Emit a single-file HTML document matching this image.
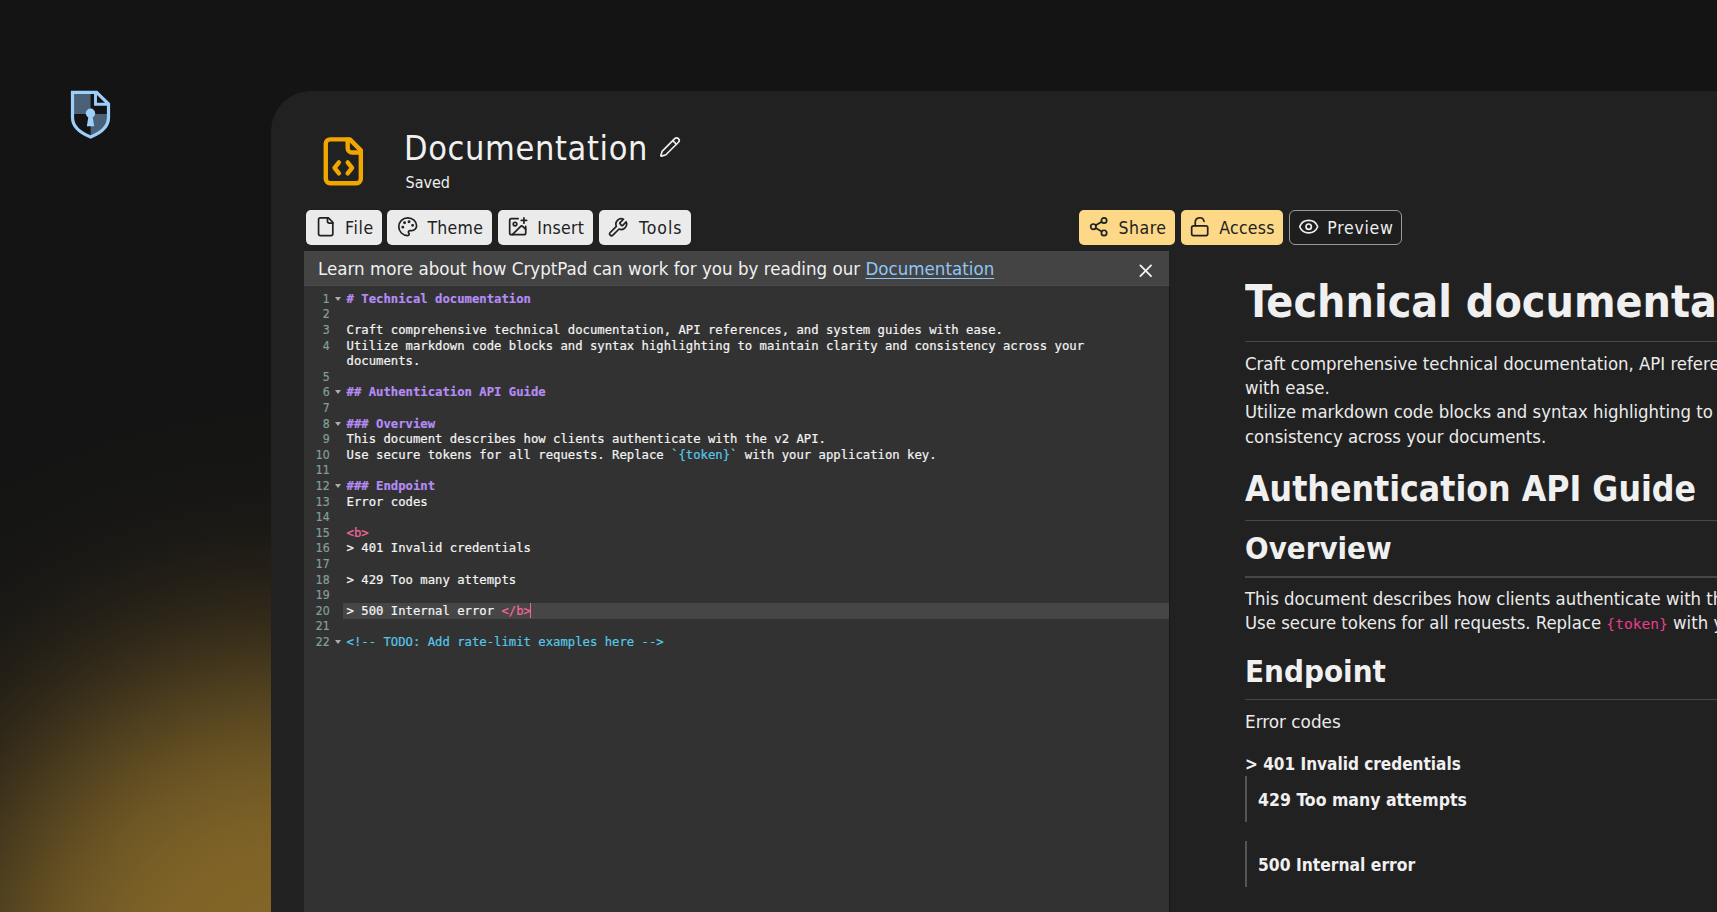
<!DOCTYPE html>
<html lang="en">
<head>
<meta charset="utf-8">
<title>Documentation - CryptPad</title>
<style>
*{box-sizing:border-box;margin:0;padding:0}
html,body{width:1717px;height:912px;overflow:hidden;background:#141414}
body{position:relative;font-family:"DejaVu Sans Condensed","Liberation Sans",sans-serif;color:#eee;-webkit-font-smoothing:antialiased}
.abs{position:absolute}
.nw{white-space:nowrap}
#glow{left:0;top:0;width:1717px;height:912px;
 background:radial-gradient(circle at 282.7px 985.6px,rgb(132,103,40) 0px,rgb(132,102,40) 20px,rgb(131,102,40) 40px,rgb(131,102,40) 60px,rgb(130,101,40) 80px,rgb(129,101,39) 100px,rgb(128,100,39) 120px,rgb(126,98,39) 140px,rgb(123,96,38) 160px,rgb(119,93,38) 180px,rgb(114,90,37) 200px,rgb(109,86,36) 220px,rgb(102,81,35) 240px,rgb(95,75,33) 260px,rgb(86,69,32) 280px,rgb(78,63,30) 300px,rgb(69,56,29) 320px,rgb(61,50,27) 340px,rgb(53,44,26) 360px,rgb(46,39,25) 380px,rgb(40,35,24) 400px,rgb(35,31,23) 420px,rgb(31,28,22) 440px,rgb(27,25,21) 460px,rgb(25,24,21) 480px,rgb(23,22,21) 500px,rgb(22,22,20) 520px,rgb(21,21,20) 540px,rgb(21,21,20) 560px,rgb(20,20,20) 580px,rgb(20,20,20) 600px,rgb(20,20,20) 620px,rgb(20,20,20) 640px,rgb(20,20,20) 680px)}
#logo{left:70px;top:90px;width:42px;height:50px}
#panel{left:271px;top:91px;width:1500px;height:900px;background:#212121;border-top-left-radius:40px}
svg.ic{position:absolute;fill:none;stroke:currentColor;stroke-width:2;stroke-linecap:round;stroke-linejoin:round}
#appicon{left:316.8px;top:134.8px;width:52.6px;height:52.6px;color:#f2a600}
#title{left:404px;top:124px;font-size:34px;line-height:48px;color:#f0f0f0;letter-spacing:.63px}
#pencil{left:658.6px;top:136.2px;width:22px;height:22px;color:#eee;stroke-width:1.8}
#saved{left:405.5px;top:171.6px;font-size:16px;line-height:22px;color:#eee}
.btn{position:absolute;top:209.5px;height:35.2px;border-radius:5px;background:#ebebeb;color:#212121;font-size:17.5px;line-height:35.2px}
.btn svg.ic{left:9.3px;top:6.9px;width:21.4px;height:21.4px;stroke-width:1.9}
.btn span{position:absolute;left:39.4px;top:1.2px;white-space:nowrap}
.btn.y{background:#fdd886}
.btn.o{background:#1e1e1e;border:1.2px solid #9a9a9a;color:#eee;border-radius:6px}
.btn.o svg.ic{left:8.3px;top:5.9px}
.btn.o span{left:38.4px;top:0px}
#banner{left:304px;top:251px;width:864.5px;height:34.7px;background:#444;border-bottom:1px solid #4a4a4a;font-size:17.5px;line-height:34px;color:#f0f0f0}
#banner .t{position:absolute;left:14px;top:1px;white-space:nowrap;transform:scaleX(1.061);transform-origin:0 0}
#banner a{color:#8ec6f6;text-decoration:underline;text-underline-offset:2.6px;text-decoration-thickness:1.1px}
#banner svg.ic{left:831.1px;top:8.9px;width:21.4px;height:21.4px;color:#f5f5f5;stroke-width:2}
#editor{left:304px;top:285.7px;width:866px;height:640px;background:#323232;border-right:1.5px solid #181818;font-family:"DejaVu Sans Mono","Liberation Mono",monospace;font-size:12.25px;line-height:15.59px;color:#f4f4f4;-webkit-text-stroke:.2px}
#editor .ln{position:absolute;left:0;width:25.8px;text-align:right;font-family:"DejaVu Sans Condensed","Liberation Sans",sans-serif;font-size:12.2px;color:#82a096;height:15.59px;line-height:15.59px}
#editor .fd{position:absolute;left:30.5px;width:0;height:0;border-left:3.1px solid transparent;border-right:3.1px solid transparent;border-top:4.5px solid #adadad}
#editor .l{position:absolute;left:42.5px;white-space:pre;height:15.59px;line-height:15.59px}
#editor .act{position:absolute;left:38.8px;width:826px;height:16.2px;background:#464646}
.h{color:#b58cf2;font-weight:bold}
.tg{color:#f2679f}
.cm{color:#56c8e8}
.q{color:#9ad0c0}
#cursor{position:absolute;width:1.2px;background:#f5609f;height:15.4px}
#preview{left:1244.8px;top:260px;width:600px;color:#ebebeb;font-size:17.5px;line-height:24.4px}
#preview .t{position:absolute;left:0;white-space:nowrap;transform-origin:0 0}
#preview .hr{position:absolute;left:0;width:600px;height:1.3px;background:#474747}
#preview .b{font-weight:bold;color:#f0f0f0}
#preview code{font-family:"DejaVu Sans Mono","Liberation Mono",monospace;font-size:13.9px;color:#e83e8c}
#preview .bar{position:absolute;left:0;width:2.2px;background:#555}
</style>
</head>
<body>
<div id="glow" class="abs"></div>
<svg id="logo" class="abs" viewBox="70 90 42 50">
 <path d="M72.5 92.3H96.6L108.5 104V117.5C108.5 127 101.5 132.6 90.6 137C79.6 132.6 72.5 127 72.5 117.5Z" fill="#141414"/>
 <path d="M73 93H90.6V114H73Z" fill="#4a6178"/>
 <path d="M90.6 114H108V118C108 127 101 132.4 90.6 136.6Z" fill="#4a6178"/>
 <path d="M72.5 92.3H96.6L108.5 104V117.5C108.5 127 101.5 132.6 90.6 137C79.6 132.6 72.5 127 72.5 117.5Z" fill="none" stroke="#9ccffa" stroke-width="3.2" stroke-linejoin="miter"/>
 <path d="M95.5 92.5V104.3H108.3" fill="none" stroke="#9ccffa" stroke-width="2.9"/>
 <circle cx="90.5" cy="113.3" r="4.7" fill="#9ccffa"/>
 <path d="M88.7 115L86.8 126.3H94.2L92.3 115Z" fill="#9ccffa"/>
</svg>
<div id="panel" class="abs"></div>

<svg id="appicon" class="ic" viewBox="0 0 24 24"><path d="M10 12.5 8 15l2 2.5"/><path d="m14 12.5 2 2.5-2 2.5"/><path d="M14 2v4a2 2 0 0 0 2 2h4"/><path d="M15 2H6a2 2 0 0 0-2 2v16a2 2 0 0 0 2 2h12a2 2 0 0 0 2-2V7z"/></svg>
<div id="title" class="abs nw">Documentation</div>
<svg id="pencil" class="ic" viewBox="0 0 24 24"><path d="M21.174 6.812a1 1 0 0 0-3.986-3.987L3.842 16.174a2 2 0 0 0-.5.83l-1.321 4.352a.5.5 0 0 0 .623.622l4.353-1.32a2 2 0 0 0 .83-.497z"/><path d="m15 5 4 4"/></svg>
<div id="saved" class="abs nw">Saved</div>

<div class="btn" style="left:306.1px;width:76px"><svg class="ic" viewBox="0 0 24 24"><path d="M15 2H6a2 2 0 0 0-2 2v16a2 2 0 0 0 2 2h12a2 2 0 0 0 2-2V7Z"/><path d="M14 2v4a2 2 0 0 0 2 2h4"/></svg><span style="letter-spacing:0.65px;margin-left:-0.4px">File</span></div>
<div class="btn" style="left:387.4px;width:105px"><svg class="ic" viewBox="0 0 24 24"><circle cx="13.5" cy="6.5" r=".7" fill="currentColor"/><circle cx="17.5" cy="10.5" r=".7" fill="currentColor"/><circle cx="8.5" cy="7.5" r=".7" fill="currentColor"/><circle cx="6.5" cy="12.5" r=".7" fill="currentColor"/><path d="M12 2C6.5 2 2 6.5 2 12s4.5 10 10 10c.926 0 1.648-.746 1.648-1.688 0-.437-.18-.835-.437-1.125-.29-.289-.438-.652-.438-1.125a1.64 1.64 0 0 1 1.668-1.668h1.996c3.051 0 5.555-2.503 5.555-5.554C21.965 6.012 17.461 2 12 2z"/></svg><span style="letter-spacing:0.3px;margin-left:0.6px">Theme</span></div>
<div class="btn" style="left:497.8px;width:95.5px"><svg class="ic" style="margin-left:-0.6px;margin-top:-0.3px" viewBox="0 0 24 24"><path d="M16 5h6"/><path d="M19 2v6"/><path d="M21 11.5V19a2 2 0 0 1-2 2H5a2 2 0 0 1-2-2V5a2 2 0 0 1 2-2h7.5"/><path d="m21 15-3.086-3.086a2 2 0 0 0-2.828 0L6 21"/><circle cx="9" cy="9" r="2"/></svg><span style="letter-spacing:0.3px;margin-left:0px">Insert</span></div>
<div class="btn" style="left:599.4px;width:91.6px"><svg class="ic" style="margin-left:-1.6px;margin-top:0.4px" viewBox="0 0 24 24"><path d="M14.7 6.3a1 1 0 0 0 0 1.4l1.6 1.6a1 1 0 0 0 1.4 0l3.77-3.77a6 6 0 0 1-7.94 7.94l-6.91 6.91a2.12 2.12 0 0 1-3-3l6.91-6.91a6 6 0 0 1 7.94-7.94l-3.76 3.76z"/></svg><span style="letter-spacing:1.0px;margin-left:0.3px">Tools</span></div>

<div class="btn y" style="left:1079px;width:96.1px"><svg class="ic" viewBox="0 0 24 24"><circle cx="18" cy="5" r="3"/><circle cx="6" cy="12" r="3"/><circle cx="18" cy="19" r="3"/><line x1="8.59" x2="15.42" y1="13.51" y2="17.49"/><line x1="15.41" x2="8.59" y1="6.51" y2="10.49"/></svg><span style="letter-spacing:0.5px;margin-left:0.2px">Share</span></div>
<div class="btn y" style="left:1181px;width:102px"><svg class="ic" style="margin-left:-1.3px;margin-top:0px" viewBox="0 0 24 24"><rect width="18" height="11" x="3" y="11" rx="2" ry="2"/><path d="M7 11V7a5 5 0 0 1 9.9-1"/></svg><span style="letter-spacing:0.3px;margin-left:-1.2px">Access</span></div>
<div class="btn o" style="left:1289px;width:112.8px"><svg class="ic" style="margin-left:-0.8px;margin-top:0px" viewBox="0 0 24 24"><path d="M2.062 12.348a1 1 0 0 1 0-.696 10.75 10.75 0 0 1 19.876 0 1 1 0 0 1 0 .696 10.75 10.75 0 0 1-19.876 0"/><circle cx="12" cy="12" r="3"/></svg><span style="letter-spacing:0.75px;margin-left:-1.2px">Preview</span></div>

<div id="banner" class="abs"><div class="t">Learn more about how CryptPad can work for you by reading our <a>Documentation</a></div><svg class="ic" viewBox="0 0 24 24"><path d="M18 6 6 18"/><path d="m6 6 12 12"/></svg></div>

<div id="editor" class="abs">
<div class="ln" style="top:6.20px">1</div>
<div class="fd" style="top:11.10px"></div>
<div class="l" style="top:6.20px"><span class="h"># Technical documentation</span></div>
<div class="ln" style="top:21.79px">2</div>
<div class="ln" style="top:37.38px">3</div>
<div class="l" style="top:37.38px">Craft comprehensive technical documentation, API references, and system guides with ease.</div>
<div class="ln" style="top:52.97px">4</div>
<div class="l" style="top:52.97px">Utilize markdown code blocks and syntax highlighting to maintain clarity and consistency across your</div>
<div class="l" style="top:68.56px">documents.</div>
<div class="ln" style="top:84.15px">5</div>
<div class="ln" style="top:99.74px">6</div>
<div class="fd" style="top:104.64px"></div>
<div class="l" style="top:99.74px"><span class="h">## Authentication API Guide</span></div>
<div class="ln" style="top:115.33px">7</div>
<div class="ln" style="top:130.92px">8</div>
<div class="fd" style="top:135.82px"></div>
<div class="l" style="top:130.92px"><span class="h">### Overview</span></div>
<div class="ln" style="top:146.51px">9</div>
<div class="l" style="top:146.51px">This document describes how clients authenticate with the v2 API.</div>
<div class="ln" style="top:162.10px">10</div>
<div class="l" style="top:162.10px">Use secure tokens for all requests. Replace <span class="q">`</span><span class="cm">{token}</span><span class="q">`</span> with your application key.</div>
<div class="ln" style="top:177.69px">11</div>
<div class="ln" style="top:193.28px">12</div>
<div class="fd" style="top:198.18px"></div>
<div class="l" style="top:193.28px"><span class="h">### Endpoint</span></div>
<div class="ln" style="top:208.87px">13</div>
<div class="l" style="top:208.87px">Error codes</div>
<div class="ln" style="top:224.46px">14</div>
<div class="ln" style="top:240.05px">15</div>
<div class="l" style="top:240.05px"><span class="tg">&lt;b&gt;</span></div>
<div class="ln" style="top:255.64px">16</div>
<div class="l" style="top:255.64px">&gt; 401 Invalid credentials</div>
<div class="ln" style="top:271.23px">17</div>
<div class="ln" style="top:286.82px">18</div>
<div class="l" style="top:286.82px">&gt; 429 Too many attempts</div>
<div class="ln" style="top:302.41px">19</div>
<div class="act" style="top:317.10px"></div>
<div class="ln" style="top:318.00px">20</div>
<div class="l" style="top:318.00px">&gt; 500 Internal error <span class="tg">&lt;/b&gt;</span></div>
<div id="cursor" style="left:225.7px;top:317.40px"></div>
<div class="ln" style="top:333.59px">21</div>
<div class="ln" style="top:349.18px">22</div>
<div class="fd" style="top:354.08px"></div>
<div class="l" style="top:349.18px"><span class="cm">&lt;!-- TODO: Add rate-limit examples here --&gt;</span></div>
</div>
<div id="preview" class="abs">
<div class="t b" style="top:10.74px;font-size:44.8px;line-height:62.72px;transform:scaleX(0.9907);">Technical documentation</div>
<div class="hr" style="top:80.70px"></div>
<div class="t" style="top:91.59px;font-size:17.5px;line-height:24.50px;transform:scaleX(1.051);">Craft comprehensive technical documentation, API references, and system guides</div>
<div class="t" style="top:116.00px;font-size:17.5px;line-height:24.50px;transform:scaleX(1.05);">with ease.</div>
<div class="t" style="top:140.39px;font-size:17.5px;line-height:24.50px;transform:scaleX(1.048);">Utilize markdown code blocks and syntax highlighting to maintain clarity and</div>
<div class="t" style="top:164.80px;font-size:17.5px;line-height:24.50px;transform:scaleX(1.052);">consistency across your documents.</div>
<div class="t b" style="top:203.54px;font-size:36.0px;line-height:50.40px;transform:scaleX(0.9796);">Authentication API Guide</div>
<div class="hr" style="top:259.60px"></div>
<div class="t b" style="top:268.19px;font-size:30.6px;line-height:42.84px;transform:scaleX(1.011);">Overview</div>
<div class="hr" style="top:316.40px"></div>
<div class="t" style="top:327.00px;font-size:17.5px;line-height:24.50px;transform:scaleX(1.05);">This document describes how clients authenticate with the v2 API.</div>
<div class="t" style="top:351.10px;font-size:17.5px;line-height:24.50px;transform:scaleX(1.05);">Use secure tokens for all requests. Replace <code>{token}</code> with your application key.</div>
<div class="t b" style="top:390.99px;font-size:30.6px;line-height:42.84px;transform:scaleX(1.014);">Endpoint</div>
<div class="hr" style="top:438.90px"></div>
<div class="t" style="top:450.30px;font-size:17.5px;line-height:24.50px;transform:scaleX(1.07);">Error codes</div>
<div class="t b" style="top:492.20px;font-size:17.5px;line-height:24.50px;transform:scaleX(0.973);">&gt; 401 Invalid credentials</div>
<div class="bar" style="top:516.10px;height:46.3px"></div>
<div class="t b" style="left:13.3px;top:528.10px;font-size:17.5px;line-height:24.50px;">429 Too many attempts</div>
<div class="bar" style="top:580.70px;height:46px"></div>
<div class="t b" style="left:13.3px;top:592.50px;font-size:17.5px;line-height:24.50px;transform:scaleX(0.989);">500 Internal error</div>
</div>
</body>
</html>
